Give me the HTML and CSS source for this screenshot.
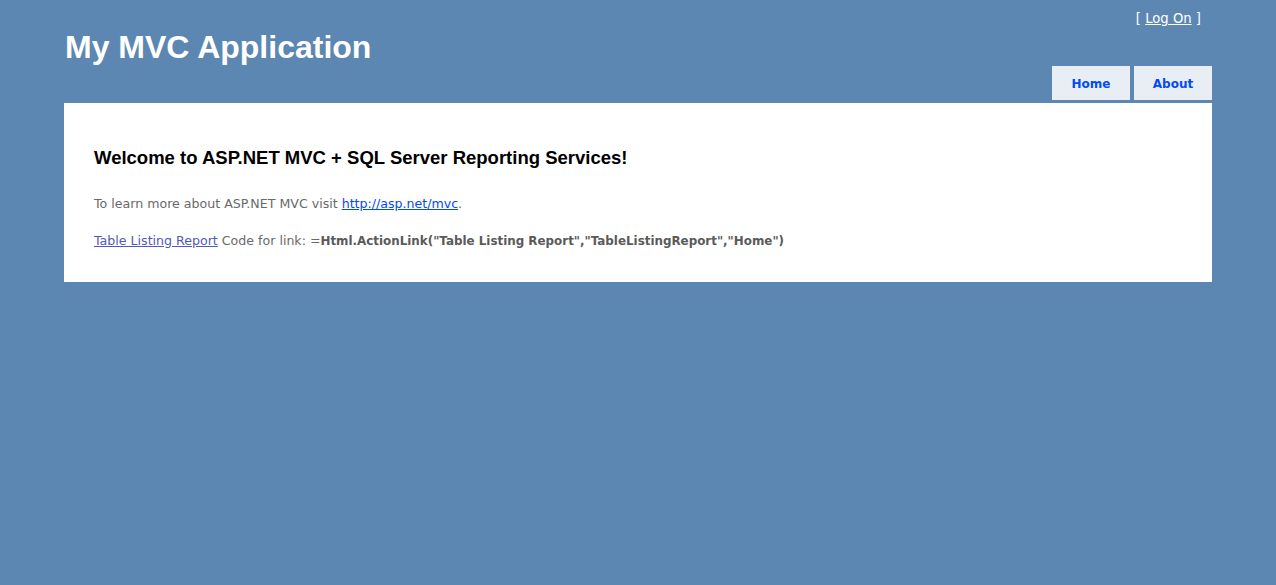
FILE: index.html
```html
<!DOCTYPE html>
<html>
<head>
    <meta charset="utf-8" />
    <title>Home Page</title>
    <link rel="stylesheet" href="styles.css">
</head>
<body>
    <div class="page">
        <div class="header">
            <div class="title">
                <h1>My MVC Application</h1>
            </div>
            <div class="header-right">
                <div class="logindisplay">
                    [ <a href="#">Log On</a> ]
                </div>
                <ul class="menu">
                    <li><a href="#">Home</a></li>
                    <li><a href="#">About</a></li>
                </ul>
            </div>
        </div>

        <div class="main">
            <h2>Welcome to ASP.NET MVC + SQL Server Reporting Services!</h2>
            <p>
                To learn more about ASP.NET MVC visit <a href="#" class="link">http://asp.net/mvc</a>.
            </p>
            <p>
                <a href="#" class="visited">Table Listing Report</a> Code for link: =<strong>Html.ActionLink("Table Listing Report","TableListingReport","Home")</strong>
            </p>
        </div>
    </div>
</body>
</html>
```

FILE: styles.css
```css
html {
    margin: 0px;
    padding: 0px;
}

body {
    background-color: #5c87b2;
    margin: 0px;
    padding: 0px;
    font-size: 12px;
    font-family: "DejaVu Sans", Verdana, sans-serif;
    color: #696969;
}

.page {
    width: 1148px;
    margin-left: auto;
    margin-right: auto;
}

.header {
    display: flex;
    justify-content: space-between;
    height: 103px;
}

.title h1 {
    margin: 0px;
    padding: 29px 0 0 1px;
    font-family: "Liberation Sans", Arial, sans-serif;
    font-size: 32px;
    line-height: 36px;
    font-weight: bold;
    color: #fff;
}

.header-right {
    display: flex;
    flex-direction: column;
    align-items: flex-end;
}

.logindisplay {
    margin: 11px 11px 0 0;
    font-size: 13.2px;
    line-height: 16px;
    color: #fff;
}

.logindisplay a {
    color: #fff;
}

.menu {
    list-style: none;
    display: flex;
    gap: 4px;
    margin: 39px 0 0 0;
    padding: 0px;
}

.menu a {
    display: block;
    width: 78px;
    padding: 11px 0 9px 0;
    text-align: center;
    font-size: 12px;
    line-height: 14px;
    font-weight: bold;
    text-decoration: none;
    background-color: #e8eef4;
    color: #034af3;
}

.main {
    background-color: #fff;
    padding: 30px 30px 15px 30px;
}

.main h2 {
    margin: 14px 0 0 0;
    font-family: "Liberation Sans", Arial, sans-serif;
    font-size: 18.5px;
    line-height: 22px;
    color: #000;
}

.main p {
    margin: 20px 0 17px 0;
    font-size: 12.6px;
    line-height: 17px;
}

.main h2 + p {
    margin-top: 26px;
}

.main strong {
    font-size: 11.9px;
    color: #5a5a5a;
}

.link {
    color: #034af3;
}

.visited {
    color: #505abc;
}
```
